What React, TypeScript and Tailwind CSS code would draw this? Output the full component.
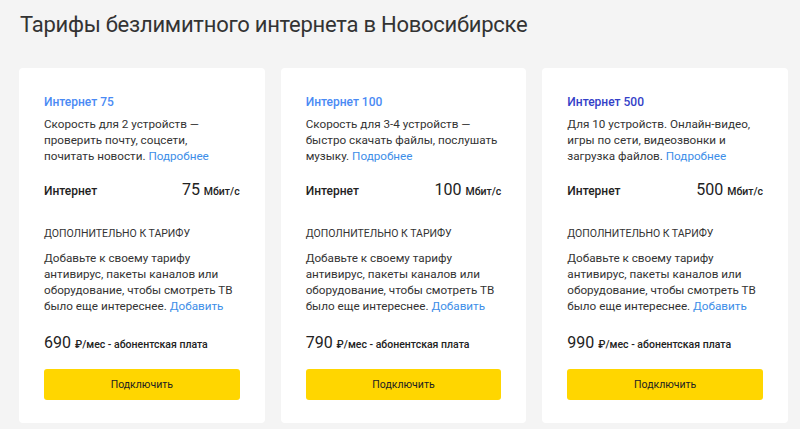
const plans = [
  {
    id: 1,
    name: 'Интернет 75',
    nameColor: 'text-[#4a8af4]',
    description: 'Скорость для 2 устройств — проверить почту, соцсети, почитать новости.',
    speed: '75',
    price: '690',
  },
  {
    id: 2,
    name: 'Интернет 100',
    nameColor: 'text-[#4a8af4]',
    description: 'Скорость для 3-4 устройств — быстро скачать файлы, послушать музыку.',
    speed: '100',
    price: '790',
  },
  {
    id: 3,
    name: 'Интернет 500',
    nameColor: 'text-[#3340c8]',
    description: 'Для 10 устройств. Онлайн-видео, игры по сети, видеозвонки и загрузка файлов.',
    speed: '500',
    price: '990',
  },
]

export default function App() {
  return (
    <div className="min-h-screen bg-[#f4f4f4] pl-[19px] pr-[12px] font-['Roboto',sans-serif] text-[#333]">
      <h1 className="pt-[9px] pl-[1px] text-[22px] leading-8 font-normal tracking-[-0.25px] text-[#333]">
        Тарифы безлимитного интернета в Новосибирске
      </h1>

      <div className="mt-[27px] grid grid-cols-3 gap-4">
        {plans.map((plan) => (
          <div key={plan.id} className="rounded bg-white px-[25px] pt-[26px] pb-[23px]">
            <h3 className={`text-[12px] leading-4 font-medium ${plan.nameColor}`}>{plan.name}</h3>
            <p className="mt-1.5 text-[11.7px] leading-4 text-[#333]">
              {plan.description} <a href="#" className="text-[#3d8ee8]">Подробнее</a>
            </p>

            <div className="mt-[14px] flex items-center justify-between leading-6">
              <span className="text-[12px] font-medium text-[#222]">Интернет</span>
              <span className="text-[#222]">
                <span className="text-[16px]">{plan.speed}</span>{' '}
                <span className="text-[10.5px] font-medium">Мбит/с</span>
              </span>
            </div>

            <div className="mt-[22px] text-[10.5px] leading-4 uppercase text-[#333]">
              Дополнительно к тарифу
            </div>
            <p className="mt-[8px] text-[11.7px] leading-4 text-[#333]">
              Добавьте к своему тарифу антивирус, пакеты каналов или оборудование, чтобы смотреть ТВ было еще интереснее.{' '}
              <a href="#" className="text-[#3d8ee8]">Добавить</a>
            </p>

            <div className="mt-[17px] leading-6 text-[#222]">
              <span className="text-[16px]">{plan.price}</span>{' '}
              <span className="text-[10.5px] font-medium">₽/мес - абонентская плата</span>
            </div>

            <button className="mt-[12px] h-[31px] w-full rounded-[3px] bg-[#ffd600] text-[10.5px] text-[#222]">
              Подключить
            </button>
          </div>
        ))}
      </div>
    </div>
  )
}
